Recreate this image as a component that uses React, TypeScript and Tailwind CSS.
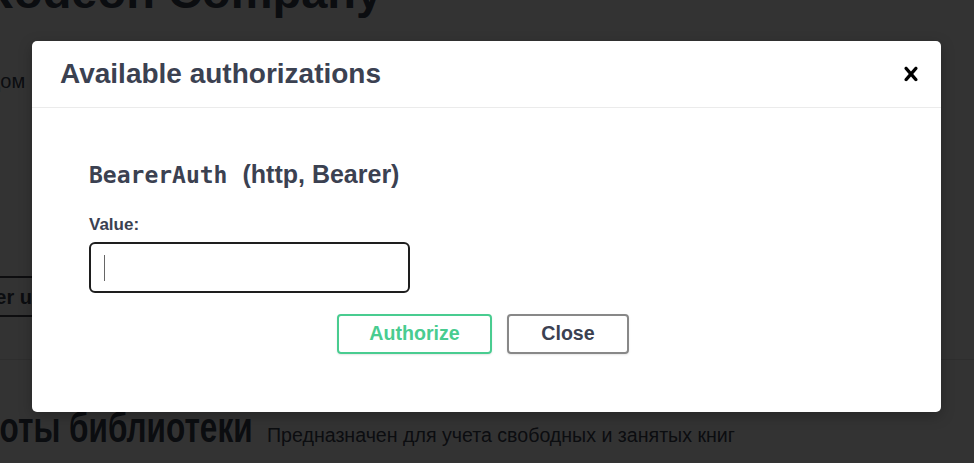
function PageBehind() {
  return (
    <div className="flex flex-col text-[#3b4151]">
      <h1 className="-ml-[20px] -mt-[32px] whitespace-nowrap text-[47px] font-bold leading-none">
        Rodeon Company
      </h1>
      <p className="-ml-[50px] mt-[56px] whitespace-nowrap text-[20px] leading-none">
        фондом , сервис для учета книг
      </p>

      <div className="mt-[185px] border-b border-[#e4e4e4] pb-[42px]">
        <div className="-ml-[60px] flex h-[41px] w-[220px] items-center border-2 border-[#41444e] px-[10px] text-[20px] font-bold">
          Server url
        </div>
      </div>

      <div className="flex items-baseline pt-[47px]">
        <div className="-ml-[58px] w-[310px] shrink-0">
          <h3 className="origin-left scale-x-75 whitespace-nowrap text-[42px] font-bold leading-none">
            Работы библиотеки
          </h3>
        </div>
        <span className="ml-[15px] whitespace-nowrap text-[19.6px]">
          Предназначен для учета свободных и занятых книг
        </span>
      </div>
    </div>
  );
}

function AuthDialog() {
  return (
    <div className="flex h-[371px] w-[909px] flex-col rounded-[5px] bg-white shadow-[0_4px_14px_rgba(0,0,0,0.25)]">
      <header className="flex h-[67px] shrink-0 items-center justify-between border-b border-[#ebebeb] pl-[28px] pr-[16px]">
        <h3 className="text-[28px] font-bold text-[#3b4151]">
          Available authorizations
        </h3>
        <button type="button" aria-label="Close" className="flex h-[28px] w-[28px] items-center justify-center">
          <svg viewBox="0 0 20 20" className="h-[28px] w-[28px]" fill="#000">
            <path d="M14.348 14.849c-.469.469-1.229.469-1.697 0L10 11.819l-2.651 3.029c-.469.469-1.229.469-1.697 0-.469-.469-.469-1.229 0-1.697l2.758-3.15-2.759-3.152c-.469-.469-.469-1.228 0-1.697.469-.469 1.228-.469 1.697 0L10 8.183l2.651-3.031c.469-.469 1.228-.469 1.697 0 .469.469.469 1.229 0 1.697l-2.758 3.152 2.758 3.15c.469.469.469 1.229 0 1.698z" />
          </svg>
        </button>
      </header>

      <div className="flex flex-col pl-[57px] pr-[28px] pt-[54px] text-[#3b4151]">
        <h4 className="flex items-baseline leading-none">
          <code className="font-['DejaVu_Sans_Mono',monospace] text-[23px] font-bold">
            BearerAuth
          </code>
          <span className="ml-[15px] text-[25px] font-bold">(http, Bearer)</span>
        </h4>

        <label className="mt-[29px] text-[17px] font-bold leading-none">Value:</label>
        <div className="mt-[9px] flex h-[51px] w-[321px] items-center rounded-[6px] border-2 border-[#1e1e1e] pl-[13px]">
          <span className="h-[26px] w-px bg-[#666]" />
        </div>

        <div className="mt-[21px] flex justify-center gap-[15px] pr-[36px]">
          <button
            type="button"
            className="h-[40px] w-[155px] rounded-[4px] border-2 border-[#49cc90] text-[19.6px] font-bold text-[#49cc90] shadow-[0_1px_2px_rgba(0,0,0,0.1)]"
          >
            Authorize
          </button>
          <button
            type="button"
            className="h-[40px] w-[122px] rounded-[4px] border-2 border-[#888] text-[19.6px] font-bold text-[#3b4151] shadow-[0_1px_2px_rgba(0,0,0,0.1)]"
          >
            Close
          </button>
        </div>
      </div>
    </div>
  );
}

export default function App() {
  return (
    <div className="relative h-[463px] w-[974px] overflow-hidden bg-white font-['Liberation_Sans',Arial,sans-serif]">
      <PageBehind />
      <div className="absolute inset-0 bg-black/80" />
      <div className="absolute inset-0 flex pl-[32px] pt-[41px]">
        <AuthDialog />
      </div>
    </div>
  );
}
